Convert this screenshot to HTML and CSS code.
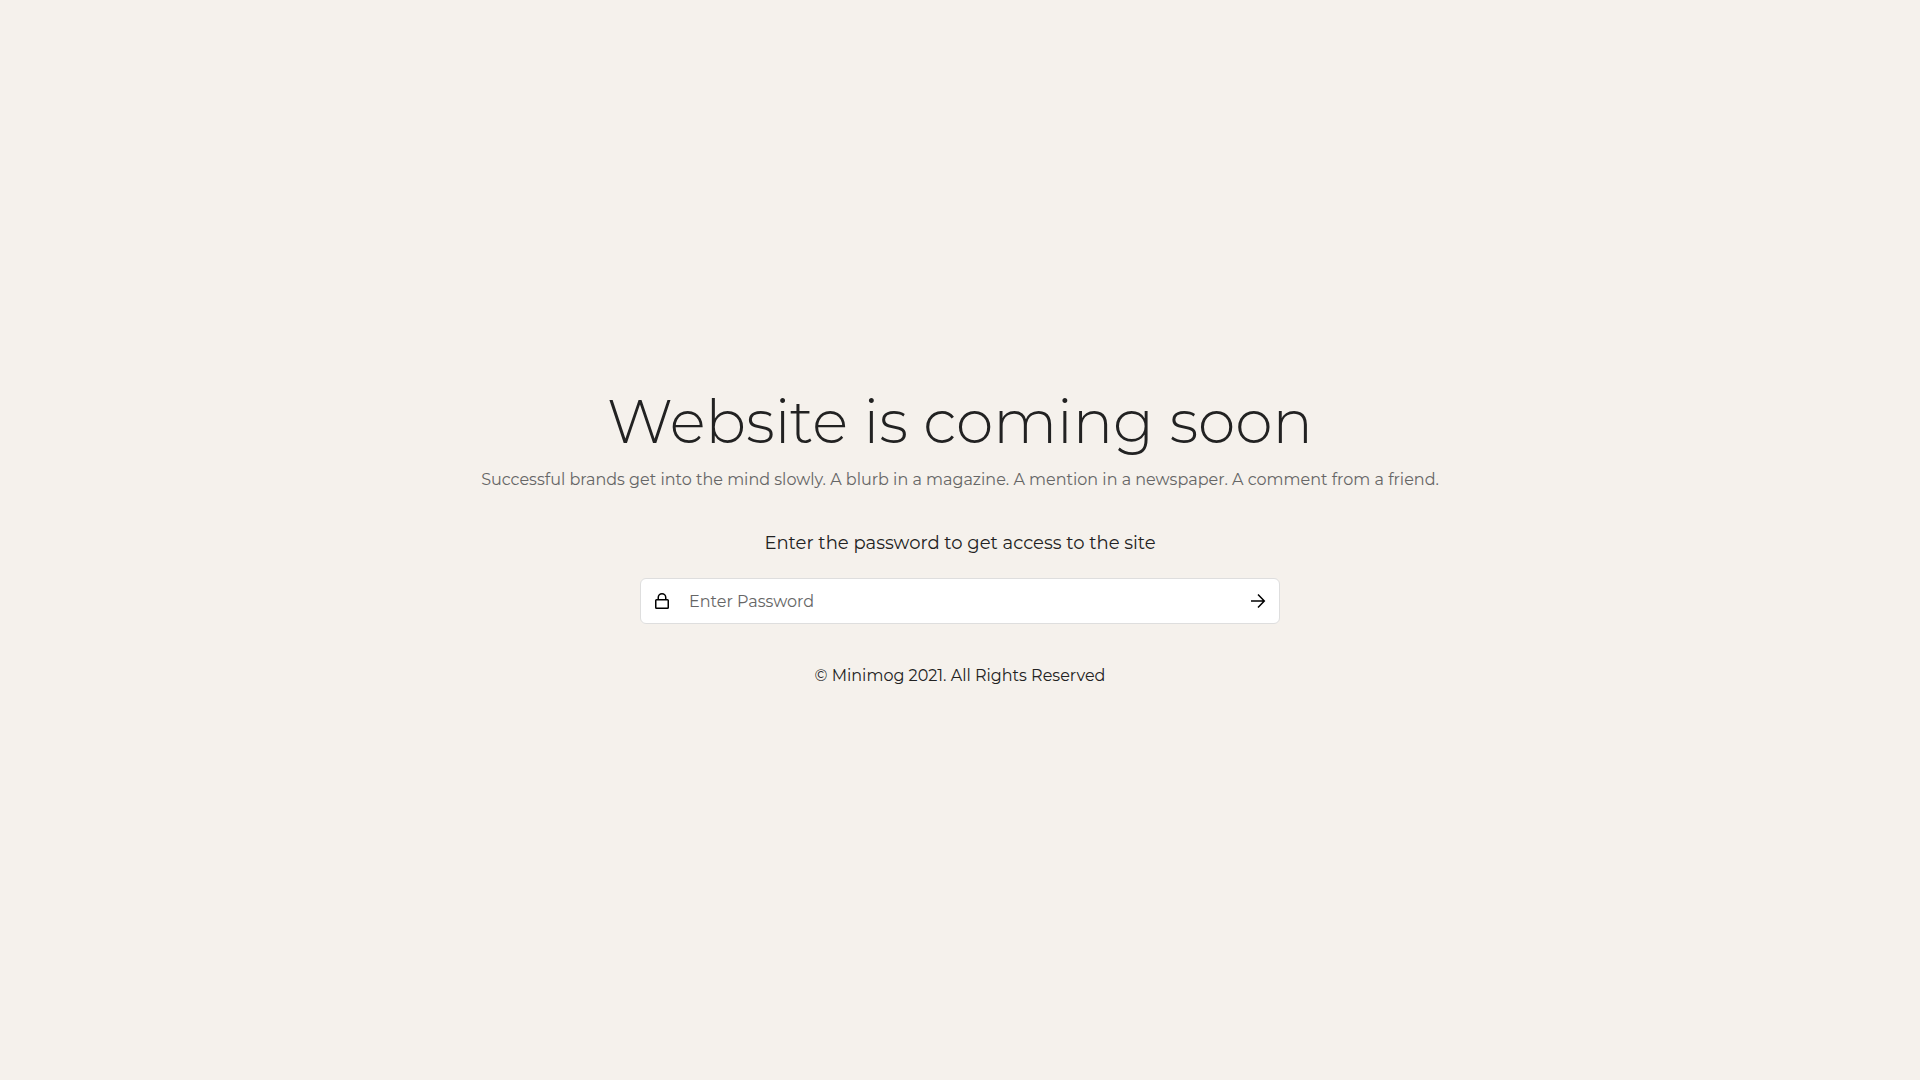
FILE: index.html
```
<!DOCTYPE html>
<html lang="en">
<head>
<meta charset="utf-8">
<meta name="viewport" content="width=device-width,initial-scale=1">
<title>Website is coming soon</title>
<link rel="stylesheet" href="styles.css">
</head>
<body>
<main class="password-page">
	<h1 class="title">Website is coming soon</h1>
	<p class="desc">Successful brands get into the mind slowly. A blurb in a magazine. A mention in a newspaper. A comment from a friend.</p>
	<form class="password-form">
		<label class="form-label" for="password">Enter the password to get access to the site</label>
		<div class="field">
			<svg class="icon" viewBox="0 0 16 16" aria-hidden="true">
				<rect x="1.75" y="6.75" width="12.5" height="8.5" rx="0.75"/>
				<path d="M4.25 6.5V4.5a3.75 3.75 0 0 1 7.5 0V6.5"/>
			</svg>
			<input class="input" type="password" id="password" name="password" placeholder="Enter Password">
			<button class="submit" type="submit" aria-label="Enter">
				<svg class="icon" viewBox="0 0 16 16" aria-hidden="true">
					<path d="M1 8h13M8 1.5 14.3 8 8 14.5"/>
				</svg>
			</button>
		</div>
	</form>
	<footer class="copyright">© Minimog 2021. All Rights Reserved</footer>
</main>
</body>
</html>
```
FILE: styles.css
```
*,*:before,*:after{
	margin: 0;
	padding: 0;
	box-sizing: border-box;
}
body{
	background-color: #f5f1ec;
	color: #222;
	font-family: Montserrat, Inter, sans-serif;
	font-size: 16px;
	line-height: 28px;
}
.password-page{
	display: flex;
	flex-direction: column;
	align-items: center;
	justify-content: center;
	min-height: 100vh;
	padding: 16px 16px 20px;
	text-align: center;
}
.title{
	font-size: 60px;
	font-weight: 300;
	line-height: 72px;
	margin-bottom: 8px;
}
.desc{
	color: #666;
	margin-bottom: 36px;
}
.password-form{
	width: 100%;
	max-width: 640px;
	margin-bottom: 38px;
}
.form-label{
	display: block;
	font-size: 18px;
	line-height: 26px;
	margin-bottom: 22px;
}
.field{
	display: flex;
	align-items: center;
	height: 46px;
	padding-left: 13px;
	background-color: #fff;
	border: 1px solid #dedede;
	border-radius: 6px;
}
.icon{
	display: block;
	flex: none;
	width: 16px;
	height: 16px;
	fill: none;
	stroke: #000;
	stroke-width: 1.5;
}
.input{
	flex: 1;
	min-width: 0;
	height: 100%;
	padding-left: 19px;
	border: 0;
	outline: 0;
	background: none;
	color: #222;
	font: inherit;
}
.input::placeholder{
	color: #666;
	opacity: 1;
}
.submit{
	height: 100%;
	padding: 0 13px;
	border: 0;
	background: none;
	cursor: pointer;
}
```
